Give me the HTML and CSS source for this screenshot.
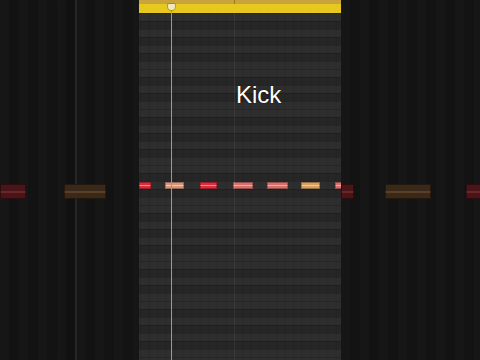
FILE: index.html
```html
<!DOCTYPE html>
<html>
<head>
    <title>Kick</title>
    <link rel="stylesheet" href="styles.css">
</head>
<body>
    <div class="stage">
        <div class="side side-left">
            <div class="side-line"></div>
            <div class="side-lane">
                <span class="ghost ghost-red" style="left:0;width:26px"></span>
                <span class="ghost ghost-tan" style="left:64px;width:42px"></span>
            </div>
        </div>

        <div class="roll">
            <div class="ruler">
                <div class="ruler-top"></div>
                <div class="ruler-bar"></div>
            </div>
            <div class="grid">
                <div class="lane">
                    <span class="note note-red" style="left:0;width:12px"></span>
                    <span class="note note-tan" style="left:26px;width:19px"></span>
                    <span class="note note-red" style="left:61px;width:17px"></span>
                    <span class="note note-salmon" style="left:94px;width:20px"></span>
                    <span class="note note-salmon" style="left:128px;width:21px"></span>
                    <span class="note note-gold" style="left:162px;width:19px"></span>
                    <span class="note note-salmon" style="left:196px;width:10px"></span>
                </div>
            </div>
            <div class="bar-line"></div>
            <div class="playhead"></div>
            <div class="title">Kick</div>
        </div>

        <div class="side side-right">
            <div class="side-lane">
                <span class="ghost ghost-red" style="left:0;width:13px"></span>
                <span class="ghost ghost-tan" style="left:44px;width:46px"></span>
                <span class="ghost ghost-red" style="left:125px;width:20px"></span>
            </div>
        </div>
    </div>
</body>
</html>
```

FILE: styles.css
```css
html, body {
    margin: 0;
    padding: 0;
    background: #121212;
    font-family: "Liberation Sans", Arial, sans-serif;
}

.stage {
    display: flex;
    width: 480px;
    height: 360px;
    overflow: hidden;
}

/* blurred, zoomed copy on both sides */
.side {
    position: relative;
    width: 139px;
    flex: none;
    background:
        repeating-linear-gradient(to right, rgba(255,255,255,0.008) 0 9px, rgba(0,0,0,0.08) 9px 19px),
        #141414;
}

.side-line {
    position: absolute;
    left: 75px;
    top: 0;
    bottom: 0;
    width: 2px;
    background: #262626;
    box-shadow: -6px 0 6px rgba(0,0,0,0.3);
}

.side-lane {
    position: relative;
    margin-top: 184px;
    height: 15px;
}

.ghost {
    position: absolute;
    top: 0;
    height: 15px;
    box-sizing: border-box;
    border: 1px solid rgba(0,0,0,0.4);
}

.ghost-red {
    background: linear-gradient(to bottom, #4a1518 0 6px, #6a2628 6px 8px, #4a1518 8px);
}

.ghost-tan {
    background: linear-gradient(to bottom, #3a2818 0 6px, #5a4026 6px 8px, #3a2818 8px);
}

/* piano roll */
.roll {
    position: relative;
    width: 202px;
    flex: none;
    display: flex;
    flex-direction: column;
    background: #2a2a2a;
}

.ruler-top {
    height: 4px;
    background: linear-gradient(to right, #c9a33c 0 95px, #9a7a28 95px 96px, #c9a33c 96px);
}

.ruler-bar {
    height: 9px;
    background: #e6c81e;
}

.grid {
    flex: 1;
    background:
        repeating-linear-gradient(to right, rgba(0,0,0,0.09) 0 1px, transparent 1px 8.5px),
        repeating-linear-gradient(to bottom,
            rgba(0,0,0,0.18) 0 1px, transparent 1px 8px),
        repeating-linear-gradient(to bottom,
            #2e2e2e 0 8px, #262626 8px 16px, #2e2e2e 16px 24px, #262626 24px 32px,
            #2e2e2e 32px 40px, #262626 40px 48px, #2e2e2e 48px 56px, #2e2e2e 56px 64px,
            #262626 64px 72px, #2e2e2e 72px 80px, #262626 80px 88px, #2e2e2e 88px 96px);
    background-position: 1.5px 0, 0 0, 0 0;
}

.lane {
    position: relative;
    margin-top: 168px;
    height: 8px;
}

.note {
    position: absolute;
    top: 1px;
    height: 7px;
    box-sizing: border-box;
    border: 1px solid rgba(0,0,0,0.3);
}

.note-red {
    background: linear-gradient(to bottom, #dc2d3d 0 2px, #f58a94 2px 3px, #dc2d3d 3px);
}

.note-tan {
    background: linear-gradient(to bottom, #d4967a 0 2px, #f0c8b0 2px 3px, #d4967a 3px);
}

.note-salmon {
    background: linear-gradient(to bottom, #d6706c 0 2px, #f0aaa6 2px 3px, #d6706c 3px);
}

.note-gold {
    background: linear-gradient(to bottom, #d6a060 0 2px, #f0cc98 2px 3px, #d6a060 3px);
}

.bar-line {
    position: absolute;
    left: 95px;
    top: 13px;
    bottom: 0;
    width: 1px;
    background: rgba(255,255,255,0.08);
}

.playhead {
    position: absolute;
    left: 32px;
    top: 4px;
    bottom: 0;
    width: 1px;
    background: #9a9a94;
}

.playhead::before {
    content: "";
    position: absolute;
    left: -3px;
    top: 0;
    width: 7px;
    height: 6px;
    border-radius: 1px 1px 4px 4px;
    background: #f2e8c0;
    box-shadow: 0 0 0 1px rgba(120,90,20,0.4);
}

.title {
    position: absolute;
    left: 97px;
    top: 83px;
    font-size: 24px;
    line-height: 24px;
    color: #ffffff;
    text-shadow: 0 0 2px rgba(0,0,0,0.5);
}
```
